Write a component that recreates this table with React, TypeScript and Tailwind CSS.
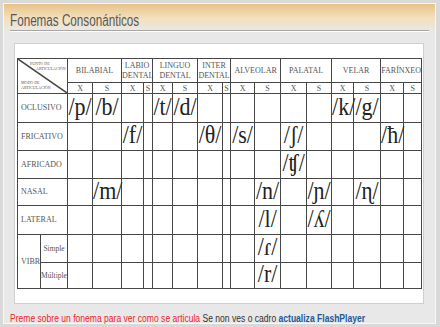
const places = [
  { name: ['BILABIAL'], xs: ['w-[25px]', 'w-[29px]'] },
  { name: ['LABIO', 'DENTAL'], xs: ['w-[22px]', 'w-[9px]'] },
  { name: ['LINGUO', 'DENTAL'], xs: ['w-[20px]', 'w-[25px]'] },
  { name: ['INTER', 'DENTAL'], xs: ['w-[25px]', 'w-[8px]'] },
  { name: ['ALVEOLAR'], xs: ['w-[24px]', 'w-[26px]'] },
  { name: ['PALATAL'], xs: ['w-[26px]', 'w-[25px]'] },
  { name: ['VELAR'], xs: ['w-[22px]', 'w-[27px]'] },
  { name: ['FARÍNXEO'], xs: ['w-[23px]', 'w-[18px]'] },
];

// 16 cells per row: X/S for each point of articulation
const rows: { label: string; h: string; cells: Record<number, string> }[] = [
  { label: 'OCLUSIVO', h: 'h-[29px]', cells: { 0: '/p/', 1: '/b/', 4: '/t/', 5: '/d/', 12: '/k/', 13: '/g/' } },
  { label: 'FRICATIVO', h: 'h-[28px]', cells: { 2: '/f/', 6: '/θ/', 8: '/s/', 10: '/ʃ/', 14: '/ħ/' } },
  { label: 'AFRICADO', h: 'h-[28px]', cells: { 10: '/ʧ/' } },
  { label: 'NASAL', h: 'h-[27px]', cells: { 1: '/m/', 9: '/n/', 11: '/ɲ/', 13: '/ɳ/' } },
  { label: 'LATERAL', h: 'h-[29px]', cells: { 9: '/l/', 11: '/ʎ/' } },
];

const vibr = [
  { label: 'Simple', h: 'h-[28px]', cells: { 9: '/ɾ/' } as Record<number, string> },
  { label: 'Múltiple', h: 'h-[25px]', cells: { 9: '/r/' } as Record<number, string> },
];

const cell = 'border border-[#474747] p-0';

function Phonemes({ cells }: { cells: Record<number, string> }) {
  return (
    <>
      {Array.from({ length: 16 }, (_, i) => (
        <td key={i} className={`${cell} text-center align-middle whitespace-nowrap`}>
          {cells[i] && (
            <span className="inline-block text-[22px] leading-none text-[#222] scale-y-[1.1]">
              {cells[i]}
            </span>
          )}
        </td>
      ))}
    </>
  );
}

export default function App() {
  return (
    <div className="w-[440px] h-[327px] bg-[#d9d9d9] pt-[3px] pl-[3px] pr-[4px] pb-[3px] font-['Liberation_Sans',Arial,sans-serif]">
      <div className="h-full bg-[#e8e8e8] border border-[#f7f7f7] flex flex-col">
        {/* Header band */}
        <div className="bg-gradient-to-b from-[#e6c386] via-[#f3e0bd] to-[#e8e8e8] pt-[8px] px-[6px]">
          <div className="leading-[18px] text-[16px] text-[#585858] whitespace-nowrap">
            <span className="inline-block origin-left scale-x-[0.73]">Fonemas Consonánticos</span>
          </div>
          <div className="h-px bg-[#a6a6a6] border-b border-white box-content" />
        </div>

        {/* Chart panel */}
        <div className="mt-[11px] ml-[10px] mr-[11px] bg-white border border-[#cfcfcf] pl-[2px] pr-[1px] py-[14px] font-['Liberation_Serif',serif]">
          <table className="table-fixed border-collapse w-[404px]">
            <colgroup>
              <col className="w-[23px]" />
              <col className="w-[27px]" />
              {places.flatMap((p) => p.xs.map((w, j) => <col key={p.name[0] + j} className={w} />))}
            </colgroup>
            <tbody>
              <tr className="h-[24px]">
                <td colSpan={2} rowSpan={2} className={`${cell} relative`}>
                  <svg className="absolute inset-0 w-full h-full" viewBox="0 0 100 100" preserveAspectRatio="none">
                    <line x1="0" y1="0" x2="100" y2="100" stroke="#474747" strokeWidth="1.5" vectorEffect="non-scaling-stroke" />
                  </svg>
                  <div className="h-[34px] flex flex-col justify-between text-[4px] leading-[5px] text-[#555] pt-[2px] pb-[3px]">
                    <div className="pl-[12px]">
                      <div>PUNTO DE</div>
                      <div className="pl-[6px]">ARTICULACIÓN</div>
                    </div>
                    <div className="pl-[3px]">
                      <div>MODO DE</div>
                      <div>ARTICULACIÓN</div>
                    </div>
                  </div>
                </td>
                {places.map((p) => (
                  <td key={p.name[0]} colSpan={2} className={`${cell} text-center align-middle text-[8px] leading-[10px] text-[#555] whitespace-nowrap`}>
                    {p.name.map((n) => (
                      <div key={n}>{n}</div>
                    ))}
                  </td>
                ))}
              </tr>
              <tr className="h-[11px]">
                {places.flatMap((p) =>
                  ['X', 'S'].map((l) => (
                    <td key={p.name[0] + l} className={`${cell} text-center text-[8px] leading-[9px] text-[#555]`}>
                      {l}
                    </td>
                  ))
                )}
              </tr>
              {rows.map((r) => (
                <tr key={r.label} className={r.h}>
                  <td colSpan={2} className={`${cell} pl-[3px] text-[8px] text-[#555] align-middle`}>
                    {r.label}
                  </td>
                  <Phonemes cells={r.cells} />
                </tr>
              ))}
              {vibr.map((r, i) => (
                <tr key={r.label} className={r.h}>
                  {i === 0 && (
                    <td rowSpan={2} className={`${cell} pl-[3px] text-[8px] text-[#555] align-middle`}>
                      VIBR
                    </td>
                  )}
                  <td className={`${cell} text-center text-[7.5px] text-[#555] align-middle`}>{r.label}</td>
                  <Phonemes cells={r.cells} />
                </tr>
              ))}
            </tbody>
          </table>
        </div>

        {/* Footer note */}
        <div className="mt-[9px] px-[6px] text-[10px] leading-[12px] whitespace-nowrap">
          <span className="inline-block origin-left scale-x-[0.855]">
            <span className="text-[#f2242b]">Preme sobre un fonema para ver como se articula</span>{' '}
            <span className="text-[#333]">Se non ves o cadro</span>{' '}
            <span className="font-bold text-[#1d5a99]">actualiza FlashPlayer</span>
          </span>
        </div>
      </div>
    </div>
  );
}
